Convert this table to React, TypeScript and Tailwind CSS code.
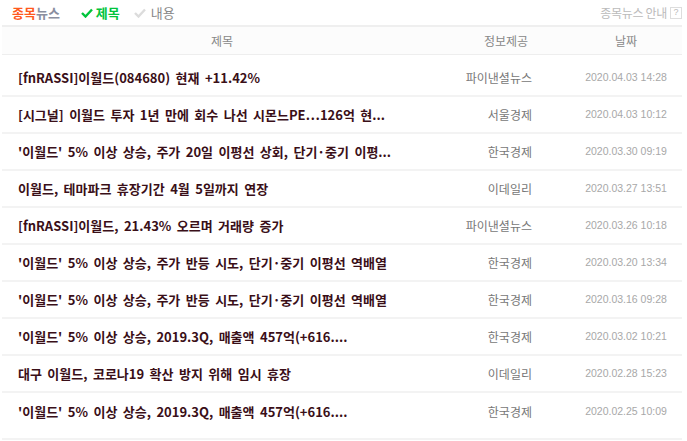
import React from "react";

const rows: [string, string, string][] = [
  ["[fnRASSI]이월드(084680) 현재 +11.42%", "파이낸셜뉴스", "2020.04.03 14:28"],
  ["[시그널] 이월드 투자 1년 만에 회수 나선 시몬느PE…126억 현...", "서울경제", "2020.04.03 10:12"],
  ["'이월드' 5% 이상 상승, 주가 20일 이평선 상회, 단기·중기 이평...", "한국경제", "2020.03.30 09:19"],
  ["이월드, 테마파크 휴장기간 4월 5일까지 연장", "이데일리", "2020.03.27 13:51"],
  ["[fnRASSI]이월드, 21.43% 오르며 거래량 증가", "파이낸셜뉴스", "2020.03.26 10:18"],
  ["'이월드' 5% 이상 상승, 주가 반등 시도, 단기·중기 이평선 역배열", "한국경제", "2020.03.20 13:34"],
  ["'이월드' 5% 이상 상승, 주가 반등 시도, 단기·중기 이평선 역배열", "한국경제", "2020.03.16 09:28"],
  ["'이월드' 5% 이상 상승, 2019.3Q, 매출액 457억(+616....", "한국경제", "2020.03.02 10:21"],
  ["대구 이월드, 코로나19 확산 방지 위해 임시 휴장", "이데일리", "2020.02.28 15:23"],
  ["'이월드' 5% 이상 상승, 2019.3Q, 매출액 457억(+616....", "한국경제", "2020.02.25 10:09"],
];

const kr = { fontFamily: '"Noto Sans CJK KR", "Noto Sans", sans-serif' };

function Check({ color }: { color: string }) {
  return (
    <svg width="12" height="10" viewBox="0 0 12 10">
      <path d="M1 5 L4.5 8.5 L11 1.5" fill="none" stroke={color} strokeWidth="2.4" />
    </svg>
  );
}

export default function App() {
  return (
    <div className="w-[687px] h-[441px] bg-white overflow-hidden" style={kr}>
      <div className="h-[25px] flex items-center pl-[12px] pr-[5px]">
        <span className="text-[13px] font-bold leading-normal">
          <span className="text-[#ff5a1e]">종목</span>
          <span className="text-[#8a8fa0]">뉴스</span>
        </span>
        <span className="ml-[21px] flex items-center gap-[3px] text-[13px] font-bold text-[#00c43c] leading-normal">
          <Check color="#00c43c" />
          <span>제목</span>
        </span>
        <span className="ml-[14px] flex items-center gap-[5px] text-[13px] text-[#888] leading-normal">
          <Check color="#dcdcdc" />
          <span>내용</span>
        </span>
        <span className="ml-auto text-[12px] text-[#bbb] leading-normal tracking-[-0.3px]">종목뉴스 안내</span>
        <span className="ml-[3px] w-[12px] h-[12px] border border-[#ddd] flex items-center justify-center text-[9px] text-[#bbb] leading-none" style={{ fontFamily: '"Liberation Sans", sans-serif' }}>?</span>
      </div>
      <div className="mx-[2px] w-[680px]">
        <div className="border-t-2 border-[#efefef] border-b border-b-[#eeeeee] bg-[#fcfcfc] h-[30px] grid grid-cols-[440px_128px_112px] items-center text-[12px] text-[#888] leading-normal">
          <div className="text-center">제목</div>
          <div className="text-center">정보제공</div>
          <div className="text-center">날짜</div>
        </div>
        <div className="pt-[5px] pb-[8px] border-b-2 border-[#f3f3f3]">
          {rows.map((r, i) => (
            <div
              key={i}
              className={`h-[37px] grid grid-cols-[440px_128px_112px] items-center ${i < rows.length - 1 ? "border-b-2 border-[#f3f3f3]" : ""}`}
            >
              <div className="pl-[16px] text-[13px] font-bold text-[#3a0f18] whitespace-nowrap leading-normal [word-spacing:2.5px]">
                {r[0]}
              </div>
              <div className="text-right pr-[38px] text-[12px] text-[#777] leading-normal">{r[1]}</div>
              <div className="text-center text-[10.5px] text-[#a8a8a8] leading-normal" style={{ fontFamily: '"Liberation Sans", sans-serif' }}>
                {r[2]}
              </div>
            </div>
          ))}
        </div>
      </div>
    </div>
  );
}
